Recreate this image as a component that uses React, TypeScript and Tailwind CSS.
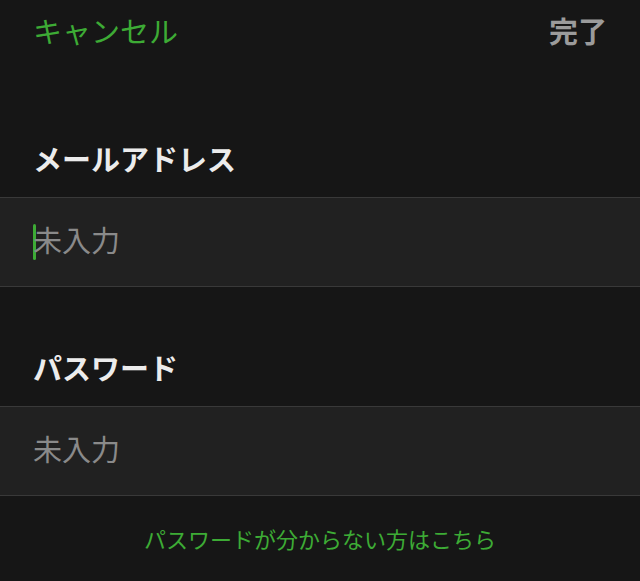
import React from 'react';

const font = { fontFamily: '"Noto Sans CJK JP", "Noto Sans", sans-serif' };

const Field = ({ label, caret }: { label: string; caret?: boolean }) => (
  <>
    <div className="flex items-end px-[33px] pb-[24px] text-[29px] leading-[29px] font-bold text-[#ececec]">
      {label}
    </div>
    <div className="flex h-[90px] items-center border-y border-[#393939] bg-[#212121] px-[33px] pb-[6px]">
      {caret && <span className="mt-[6px] mr-[-3px] h-[36px] w-[3px] rounded-sm bg-[#3dab35]" />}
      <span className="text-[29px] leading-[29px] text-[#8a8a8a]">未入力</span>
    </div>
  </>
);

const App = () => {
  return (
    <div className="min-h-[581px] bg-[#161616]" style={font}>
      <header className="flex h-[60px] items-center justify-between px-[33px] text-[29px] leading-[29px]">
        <button className="text-[#3dab35]">キャンセル</button>
        <button className="font-bold text-[#9b9b9b]">完了</button>
      </header>

      <div className="h-[84px]" />
      <Field label="メールアドレス" caret />

      <div className="h-[66px]" />
      <Field label="パスワード" />

      <div className="flex h-[84px] items-center justify-center">
        <button className="text-[22px] leading-[22px] text-[#3dab35]">パスワードが分からない方はこちら</button>
      </div>
    </div>
  );
};

export default App;
